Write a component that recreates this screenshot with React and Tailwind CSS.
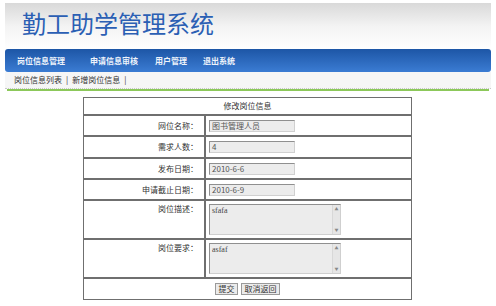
// App.jsx
const cjk = { fontFamily: '"Noto Sans CJK SC", "Noto Sans", sans-serif' };

const navItems = [
  { label: '岗位信息管理', w: 'w-[73px]' },
  { label: '申请信息审核', w: 'w-[65px]' },
  { label: '用户管理', w: 'w-[48px]' },
  { label: '退出系统', w: 'w-[48px]' },
];

const fields = [
  { label: '网位名称：', value: '图书管理人员', h: 'h-[21px]' },
  { label: '需求人数：', value: '4', h: 'h-[22px]' },
  { label: '发布日期：', value: '2010-6-6', h: 'h-[21px]' },
  { label: '申请截止日期：', value: '2010-6-9', h: 'h-[21px]' },
];

const areas = [
  { label: '岗位描述：', value: 'sfafa' },
  { label: '岗位要求：', value: 'asfaf' },
];

const TextBox = ({ value }) => (
  <div className="h-[12px] w-[86px] border border-[#8f8f8f] border-b-[#d0d0d0] border-r-[#d0d0d0] bg-[#ececec] pl-[2px] text-[8px] leading-[10px] text-[#555]">
    {value}
  </div>
);

const TextArea = ({ value }) => (
  <div className="flex h-[31px] w-[132px] border border-[#8f8f8f] border-b-[#cfcfcf] border-r-[#cfcfcf] bg-[#ececec]">
    <div className="flex-1 pl-[2px] pt-[1px] text-[8px] leading-[10px] text-[#444]" style={{ fontFamily: '"Liberation Serif", serif' }}>
      {value}
    </div>
    <div className="flex w-[8px] flex-col justify-between border-l border-[#d8d8d8] bg-[#e6e6e6] text-[4px] leading-[8px] text-[#888]">
      <span className="text-center">▲</span>
      <span className="text-center">▼</span>
    </div>
  </div>
);

export default function App() {
  return (
    <div className="relative h-[306px] w-[496px] overflow-hidden bg-white" style={cjk}>
      {/* header */}
      <div className="mx-[5px] mt-[3px] h-[46px] bg-gradient-to-b from-[#d9d9d9] via-[#f3f3f3] to-white pl-[17px] pt-[5px]">
        <h1 className="text-[24px] leading-[30px] text-[#2b5fb4]">勤工助学管理系统</h1>
      </div>

      {/* nav */}
      <div className="mx-[5px] flex h-[23px] items-center rounded-[3px] bg-gradient-to-b from-[#1d56a6] to-[#3b7cd3] pl-[12px]">
        {navItems.map((item) => (
          <span key={item.label} className={`${item.w} text-[8px] font-bold text-[#eef3fb]`}>
            {item.label}
          </span>
        ))}
      </div>

      {/* sub nav */}
      <div className="mx-[5px] flex h-[17px] items-center border-b border-dotted border-[#c8c8c8] bg-[#f6f6f6] pl-[9px] text-[8px] text-[#333]">
        <span>岗位信息列表</span>
        <span className="px-[4px]">|</span>
        <span>新增岗位信息</span>
        <span className="px-[4px]">|</span>
      </div>
      <div className="mx-[7px] h-[2px] bg-[#8cc85a]" />

      {/* form */}
      <div className="ml-[83px] mt-[6px] w-[329px] border border-[#6f6f6f] text-[8px] text-[#333]">
        <div className="flex h-[16px] items-center justify-center">修改岗位信息</div>
        {fields.map((f) => (
          <div key={f.label} className={`flex ${f.h} border-t-2 border-[#6f6f6f]`}>
            <div className="flex w-[122px] items-center justify-end border-r-2 border-[#6f6f6f] pr-[6px]">{f.label}</div>
            <div className="flex flex-1 items-center pl-[3px]">
              <TextBox value={f.value} />
            </div>
          </div>
        ))}
        {areas.map((a) => (
          <div key={a.label} className="flex h-[39px] border-t-2 border-[#6f6f6f]">
            <div className="flex w-[122px] justify-end border-r-2 border-[#6f6f6f] pr-[6px] pt-[2px]">{a.label}</div>
            <div className="flex flex-1 items-center pl-[3px]">
              <TextArea value={a.value} />
            </div>
          </div>
        ))}
        <div className="flex h-[22px] items-center justify-center gap-[3px] border-t-2 border-[#6f6f6f]">
          <button className="h-[12px] w-[23px] border border-[#9a9a9a] bg-[#ebebeb] text-[8px] leading-[10px] text-[#333]">提交</button>
          <button className="h-[12px] w-[39px] border border-[#9a9a9a] bg-[#ebebeb] text-[8px] leading-[10px] text-[#333]">取消返回</button>
        </div>
      </div>
    </div>
  );
}
